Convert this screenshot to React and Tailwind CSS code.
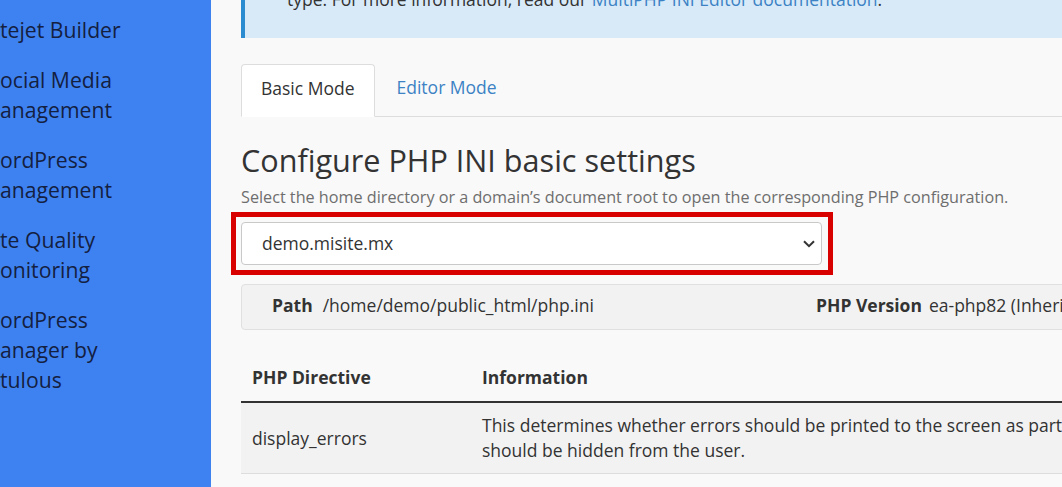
import React from "react";

const sideItems = [
  ["tejet Builder"],
  ["ocial Media", "anagement"],
  ["ordPress", "anagement"],
  ["te Quality", "onitoring"],
  ["ordPress", "anager by", "tulous"],
];

export default function App() {
  return (
    <div
      className="flex w-[1062px] h-[487px] overflow-hidden"
      style={{ fontFamily: '"Open Sans", "Noto Sans", sans-serif' }}
    >
      <aside className="w-[211px] shrink-0 bg-[#3e82f2] pt-[15px] flex flex-col gap-[20px] text-[21.2px] leading-[30px] text-[#14203f]">
        {sideItems.map((lines, i) => (
          <div key={i} className="flex flex-col whitespace-nowrap">
            {lines.map((l, j) => (
              <span key={j}>{l}</span>
            ))}
          </div>
        ))}
      </aside>

      <main className="flex-1 overflow-hidden bg-[#f9f9f9]">
        <div className="w-[1250px] pl-[30px] text-[17.5px] leading-[25px] text-[#333333]">
          {/* alert */}
          <div className="h-[38px] overflow-hidden bg-[#d8eaf8] border-l-4 border-[#2a8bd0] pl-[42px]">
            <div className="-mt-[13px] whitespace-nowrap">
              type. For more information, read our{" "}
              <span className="text-[#3c82c4]">MultiPHP INI Editor documentation</span>.
            </div>
          </div>

          {/* tabs */}
          <div className="mt-[26px] flex border-b border-[#dddddd]">
            <div className="-mb-px px-[19px] pt-[11px] pb-[15px] bg-white border border-[#dddddd] border-b-white rounded-t-[4px]">
              Basic Mode
            </div>
            <div className="px-[22px] pt-[11px] pb-[15px] text-[#3c82c4]">Editor Mode</div>
          </div>

          {/* heading */}
          <h1 className="mt-[25px] text-[30.6px] leading-[36px] text-[#333333]">
            Configure PHP INI basic settings
          </h1>
          <p className="mt-[8px] text-[16.2px] leading-[22px] text-[#6e6e6e]">
            Select the home directory or a domain’s document root to open the corresponding PHP configuration.
          </p>

          {/* select with annotation */}
          <div className="relative mt-[14px] w-[581px]">
            <div className="h-[43px] flex items-center justify-between pl-[20px] pr-[6px] bg-white border border-[#c9c9c9] rounded-[4px]">
              <span>demo.misite.mx</span>
              <svg width="12" height="8" viewBox="0 0 12 8" fill="none">
                <path d="M1 1.2l5 5 5-5" stroke="#333" strokeWidth="2" />
              </svg>
            </div>
            <div className="absolute -top-[10px] -left-[10px] -right-[11px] -bottom-[10px] border-[5px] border-[#d90000] pointer-events-none" />
          </div>

          {/* path bar */}
          <div className="mt-[19px] flex bg-[#f2f2f2] border border-[#e0e0e0] rounded-[4px] pl-[30px] pt-[8px] pb-[11px] whitespace-nowrap">
            <div className="w-[544px] flex gap-[10px]">
              <span className="font-bold">Path</span>
              <span>/home/demo/public_html/php.ini</span>
            </div>
            <div className="flex gap-[7px]">
              <span className="font-bold">PHP Version</span>
              <span>ea-php82 (Inherited from the server default)</span>
            </div>
          </div>

          {/* table */}
          <table className="mt-[22px] w-full border-collapse text-left">
            <thead>
              <tr className="border-b-2 border-[#333333]">
                <th className="w-[230px] px-[11px] pt-[13px] pb-[11px] font-bold">PHP Directive</th>
                <th className="px-[11px] pt-[13px] pb-[11px] font-bold">Information</th>
                <th className="px-[11px] pt-[13px] pb-[11px] font-bold">Setting</th>
              </tr>
            </thead>
            <tbody>
              <tr className="bg-[#f2f2f2] border-b border-[#dddddd]">
                <td className="px-[11px] py-[10px] align-middle">display_errors</td>
                <td className="px-[11px] py-[10px] align-middle whitespace-nowrap">
                  This determines whether errors should be printed to the screen as part of the output or if they
                  <br />
                  should be hidden from the user.
                </td>
                <td className="px-[11px] py-[10px]">Enabled</td>
              </tr>
            </tbody>
          </table>
        </div>
      </main>
    </div>
  );
}
